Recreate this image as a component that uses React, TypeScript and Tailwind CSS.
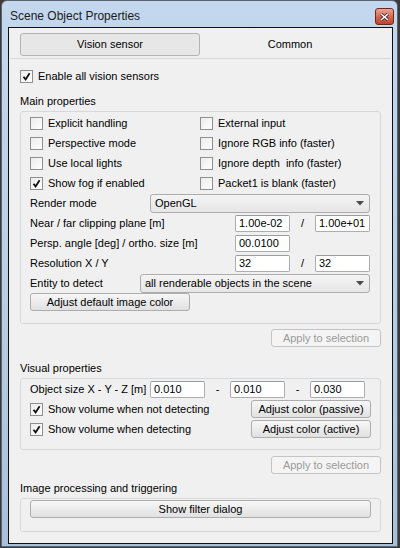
import React from "react";

const font = { fontFamily: '"Liberation Sans", Arial, sans-serif' };

function Check({ checked }: { checked?: boolean }) {
  return (
    <span className="flex h-[13px] w-[13px] shrink-0 items-center justify-center border border-[#8f8f8f] bg-linear-to-br from-[#ececec] to-white">
      {checked && (
        <svg width="9" height="9" viewBox="0 0 9 9">
          <path d="M1.5 4.8 L3.6 7.4 L7.6 1.2" fill="none" stroke="#111" strokeWidth="1.8" />
        </svg>
      )}
    </span>
  );
}

function CheckRow({ label, checked }: { label: string; checked?: boolean }) {
  return (
    <div className="flex items-center gap-[5px]">
      <Check checked={checked} />
      <span>{label}</span>
    </div>
  );
}

function Btn({
  children,
  className = "",
  disabled,
}: {
  children: React.ReactNode;
  className?: string;
  disabled?: boolean;
}) {
  return (
    <div
      className={
        "flex h-[18px] items-center justify-center rounded-[3px] border " +
        (disabled
          ? "border-[#c4c4c4] bg-[#f4f4f4] text-[#9a9a9a] "
          : "border-[#adadad] bg-linear-to-b from-[#f7f7f7] to-[#e1e1e1] ") +
        className
      }
    >
      {children}
    </div>
  );
}

function Field({ value, className = "" }: { value: string; className?: string }) {
  return (
    <div
      className={
        "flex h-[17px] w-[55px] items-center rounded-[2px] border border-[#abadb3] border-t-[#9a9ca3] bg-white pl-[3px] " +
        className
      }
    >
      {value}
    </div>
  );
}

function Select({ value, className = "" }: { value: string; className?: string }) {
  return (
    <div
      className={
        "flex h-[19px] items-center justify-between rounded-[3px] border border-[#acacac] bg-linear-to-b from-[#f4f4f4] to-[#e6e6e6] pl-[4px] pr-[5px] " +
        className
      }
    >
      <span>{value}</span>
      <svg width="8" height="5" viewBox="0 0 8 5">
        <path d="M0 0 H8 L4 4.5 Z" fill="#4a4a4a" />
      </svg>
    </div>
  );
}

function Group({ children, className = "" }: { children: React.ReactNode; className?: string }) {
  return (
    <div className={"rounded-[3px] border border-[#d5d9dc] pl-[9px] pr-[9px] " + className}>
      {children}
    </div>
  );
}

export default function App() {
  return (
    <div className="h-[548px] w-[400px] overflow-hidden bg-[#3b3b3b] pl-px pt-0 text-[11px] text-black" style={font}>
      <div className="flex h-[547px] w-[397px] flex-col rounded-t-[6px] border border-[#5a6470] bg-linear-to-b from-[#c3d8ee] via-[#b9cfe7] to-[#a9c0da]">
        {/* title bar */}
        <div className="flex h-[26px] shrink-0 items-start justify-between pl-[8px] pr-[3px]">
          <span className="mt-[6px] text-[12px] text-[#1b1b1b]">Scene Object Properties</span>
          <div className="mt-[7px] flex h-[17px] w-[19px] items-center justify-center rounded-[3px] border border-[#6b2a20] bg-linear-to-b from-[#e9a596] via-[#d66a55] to-[#c0432e]">
            <svg width="9" height="8" viewBox="0 0 9 8">
              <path d="M1 1 L8 7 M8 1 L1 7" stroke="#3b2a2a" strokeWidth="3" />
              <path d="M1 1 L8 7 M8 1 L1 7" stroke="#fff" strokeWidth="1.6" />
            </svg>
          </div>
        </div>

        {/* content */}
        <div className="ml-[6px] mr-[4px] flex h-[517px] flex-col border border-[#101010] bg-[#f0f0f0] px-[11px]">
          {/* tabs */}
          <div className="mt-[5px] flex">
            <div className="flex h-[23px] w-[180px] items-center justify-center rounded-[3px] border border-[#b3b3b3] bg-[#e7e7e7]">
              Vision sensor
            </div>
            <div className="flex h-[23px] w-[180px] items-center justify-center">Common</div>
          </div>
          <div className="-mx-[10px] mt-[2px] h-px bg-[#d9d9d9]" />

          <div className="mt-[7px] flex h-[20px] items-center">
            <CheckRow label="Enable all vision sensors" checked />
          </div>

          <div className="mt-[8px] flex h-[14px] items-center">Main properties</div>
          <Group className="mt-[3px] pb-[12px] pt-px">
            {[
              ["Explicit handling", false, "External input"],
              ["Perspective mode", false, "Ignore RGB info (faster)"],
              ["Use local lights", false, "Ignore depth  info (faster)"],
              ["Show fog if enabled", true, "Packet1 is blank (faster)"],
            ].map(([l, c, r]) => (
              <div key={l as string} className="flex h-[20px] items-center">
                <div className="w-[170px]">
                  <CheckRow label={l as string} checked={c as boolean} />
                </div>
                <CheckRow label={(r as string).replace("  ", "\u00a0 ")} />
              </div>
            ))}
            <div className="flex h-[20px] items-center">
              <span className="w-[120px]">Render mode</span>
              <Select value="OpenGL" className="w-[220px]" />
            </div>
            <div className="flex h-[20px] items-center">
              <span className="w-[205px]">Near / far clipping plane [m]</span>
              <Field value="1.00e-02" />
              <span className="w-[25px] text-center">/</span>
              <Field value="1.00e+01" />
            </div>
            <div className="flex h-[20px] items-center">
              <span className="w-[205px]">Persp. angle [deg] / ortho. size [m]</span>
              <Field value="00.0100" />
            </div>
            <div className="flex h-[20px] items-center">
              <span className="w-[205px]">Resolution X / Y</span>
              <Field value="32" />
              <span className="w-[25px] text-center">/</span>
              <Field value="32" />
            </div>
            <div className="flex h-[20px] items-center">
              <span className="w-[110px]">Entity to detect</span>
              <Select value="all renderable objects in the scene" className="w-[230px]" />
            </div>
            <Btn className="w-[160px]">Adjust default image color</Btn>
          </Group>

          <div className="mt-[5px] flex justify-end">
            <Btn disabled className="w-[110px]">
              Apply to selection
            </Btn>
          </div>

          <div className="mt-[14px] flex h-[14px] items-center">Visual properties</div>
          <Group className="mt-[3px] pb-[10px]">
            <div className="flex h-[20px] items-center">
              <span className="w-[120px]">Object size X - Y - Z [m]</span>
              <Field value="0.010" />
              <span className="w-[25px] text-center">-</span>
              <Field value="0.010" />
              <span className="w-[25px] text-center">-</span>
              <Field value="0.030" />
            </div>
            <div className="flex h-[20px] items-center justify-between">
              <CheckRow label="Show volume when not detecting" checked />
              <Btn className="w-[120px]">Adjust color (passive)</Btn>
            </div>
            <div className="flex h-[20px] items-center justify-between">
              <CheckRow label="Show volume when detecting" checked />
              <Btn className="w-[120px]">Adjust color (active)</Btn>
            </div>
          </Group>

          <div className="mt-[6px] flex justify-end">
            <Btn disabled className="w-[110px]">
              Apply to selection
            </Btn>
          </div>

          <div className="mt-[7px] flex h-[14px] items-center">Image processing and triggering</div>
          <Group className="mt-[3px] pb-[13px] pt-px">
            <Btn>Show filter dialog</Btn>
          </Group>
        </div>
      </div>
    </div>
  );
}
